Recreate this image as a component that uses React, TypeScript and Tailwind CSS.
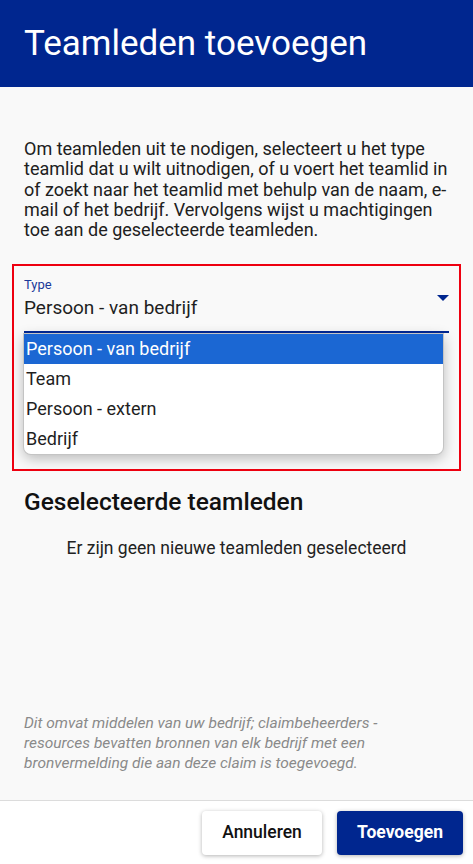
const options = ["Persoon - van bedrijf", "Team", "Persoon - extern", "Bedrijf"];

export default function App() {
  return (
    <div className="flex h-[864px] w-[473px] flex-col bg-[#f9f9f9] font-['Roboto',sans-serif] text-[#1f1f1f]">
      <header className="flex h-[87px] shrink-0 items-center bg-[#00268f] px-6">
        <h1 className="text-[35px] leading-none text-white">Teamleden toevoegen</h1>
      </header>

      <main className="flex flex-1 flex-col px-6 pt-[52px]">
        <p className="text-[18px] leading-[20.3px] text-[#202020]">
          Om teamleden uit te nodigen, selecteert u het type teamlid dat u wilt uitnodigen, of u voert het teamlid in
          of zoekt naar het teamlid met behulp van de naam, e-mail of het bedrijf. Vervolgens wijst u machtigingen toe
          aan de geselecteerde teamleden.
        </p>

        <div className="-mx-3 mt-[24px] h-[207px] border-2 border-[#ee0010] px-[10px] pt-[11px]">
          <div className="relative border-b-2 border-[#00268f] pb-[12px]">
            <div className="text-[13px] leading-[15px] text-[#1b3a9a]">Type</div>
            <div className="mt-[5px] text-[19px] leading-[22px] text-[#1f1f1f]">Persoon - van bedrijf</div>
            <svg className="absolute right-0 top-[18px]" width="12" height="6" viewBox="0 0 12 6">
              <path d="M0 0h12L6 6z" fill="#00268f" />
            </svg>
          </div>
          <ul className="mt-px w-[419px] overflow-hidden rounded-b-[7px] bg-white shadow-[0_4px_14px_rgba(0,0,0,0.28)] ring-1 ring-[#c4c4c4]">
            {options.map((o, i) => (
              <li
                key={o}
                className={
                  i === 0
                    ? "h-[30px] bg-[#1b67d3] pl-[2px] text-[18px] leading-[30px] text-white"
                    : "h-[30px] pl-[2px] text-[18px] leading-[30px] text-[#1f1f1f]"
                }
              >
                {o}
              </li>
            ))}
          </ul>
        </div>

        <h2 className="mt-[16px] text-[24.5px] font-medium leading-[30px] text-[#111]">Geselecteerde teamleden</h2>
        <p className="mt-[21px] text-center text-[17.5px] leading-[20px] text-[#222]">
          Er zijn geen nieuwe teamleden geselecteerd
        </p>

        <p className="mt-auto mb-[27px] pr-[40px] text-[15.5px] italic leading-[20px] text-[#8a8a8a]">
          Dit omvat middelen van uw bedrijf; claimbeheerders - resources bevatten bronnen van elk bedrijf met een
          bronvermelding die aan deze claim is toegevoegd.
        </p>
      </main>

      <footer className="flex h-[64px] shrink-0 items-center justify-end gap-[15px] border-t border-[#dcdcdc] bg-white px-[10px]">
        <button className="h-[44px] w-[120px] rounded-[4px] bg-white text-[17.5px] font-medium text-[#111] shadow-[0_1px_4px_rgba(0,0,0,0.3)]">
          Annuleren
        </button>
        <button className="h-[44px] w-[126px] rounded-[4px] bg-[#00268f] text-[17.5px] font-bold text-white shadow-[0_1px_4px_rgba(0,0,0,0.3)]">
          Toevoegen
        </button>
      </footer>
    </div>
  );
}
